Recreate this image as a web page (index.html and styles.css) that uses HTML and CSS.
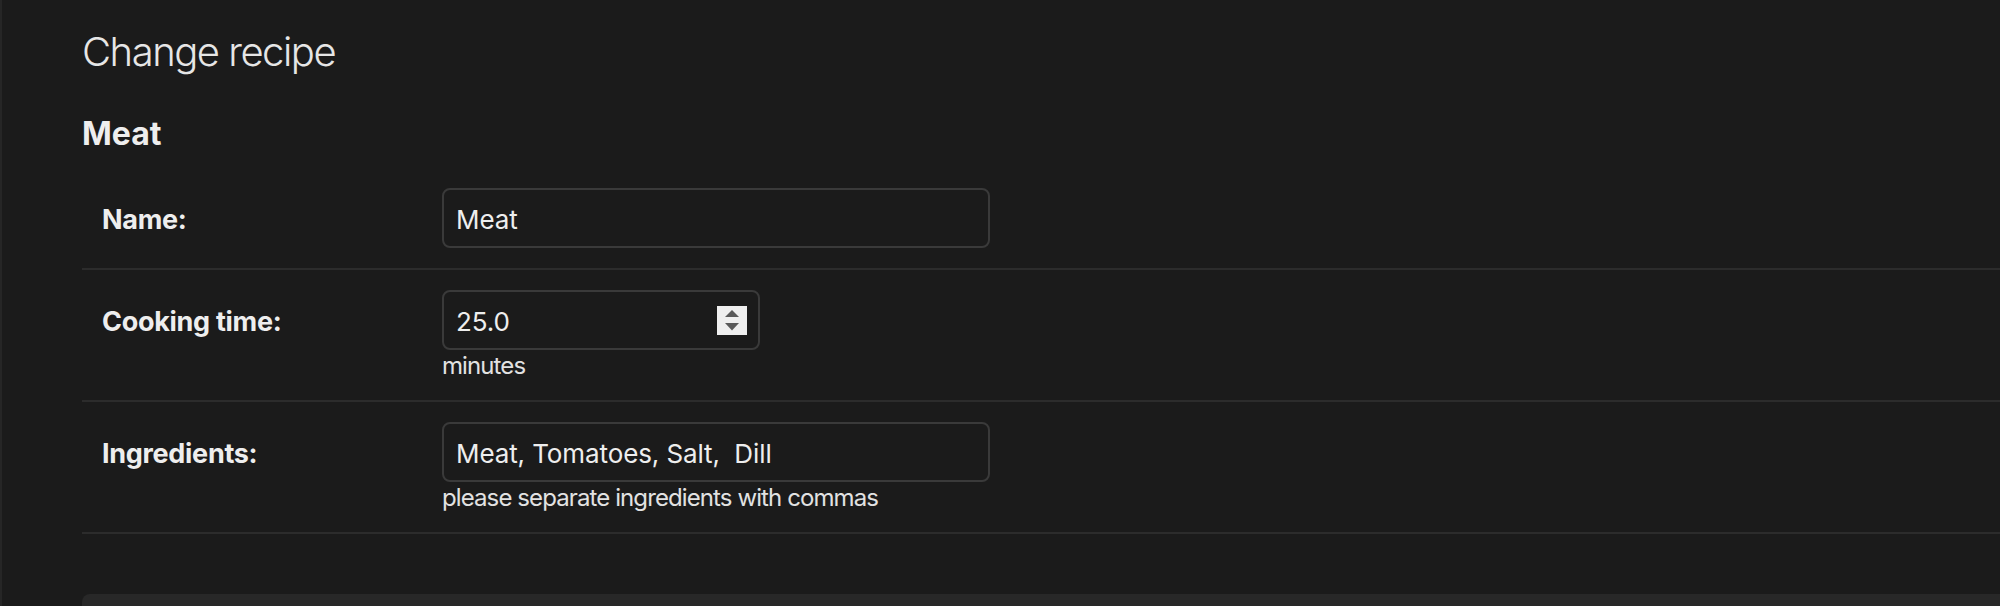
FILE: index.html
```html
<!DOCTYPE html>
<html lang="en">
<head>
<meta charset="utf-8">
<title>Change recipe</title>
<link rel="stylesheet" href="styles.css">
</head>
<body>
<div class="page">
  <main class="content">
    <h1 class="title">Change recipe</h1>
    <h2 class="subtitle">Meat</h2>
    <form class="change-form">
      <fieldset class="module">
        <div class="form-row">
          <label class="field-label" for="id_name">Name:</label>
          <div class="field-box">
            <input class="text-input" id="id_name" type="text" value="Meat">
          </div>
        </div>
        <div class="form-row">
          <label class="field-label" for="id_time">Cooking time:</label>
          <div class="field-box">
            <div class="number-box">
              <input class="number-input" id="id_time" type="text" value="25.0">
              <span class="spinner" aria-hidden="true">
                <svg width="14" height="21" viewBox="0 0 14 21"><path d="M7 0 L14 7 L0 7 Z" fill="#5a5a5a"/><path d="M0 13 L14 13 L7 20.5 Z" fill="#5a5a5a"/></svg>
              </span>
            </div>
            <div class="help">minutes</div>
          </div>
        </div>
        <div class="form-row">
          <label class="field-label" for="id_ingredients">Ingredients:</label>
          <div class="field-box">
            <input class="text-input" id="id_ingredients" type="text" value="Meat, Tomatoes, Salt,  Dill">
            <div class="help">please separate ingredients with commas</div>
          </div>
        </div>
      </fieldset>
      <div class="submit-row"></div>
    </form>
  </main>
</div>
</body>
</html>
```

FILE: styles.css
```css
html, body {
  margin: 0;
  padding: 0;
  overflow: hidden;
  background: #1b1b1b;
}
body {
  font-family: Inter, "Noto Sans", sans-serif;
  color: #eeeeee;
}
.page {
  border-left: 2px solid #262626;
  min-height: 606px;
}
.content {
  padding: 28px 0 0 80px;
}
.title {
  margin: 0;
  font-size: 40px;
  line-height: 48px;
  font-weight: 300;
  color: #e6e6e6;
  letter-spacing: -1.5px;
}
.subtitle {
  margin: 38px 0 0;
  font-size: 32px;
  line-height: 40px;
  font-weight: 700;
  color: #eeeeee;
}
.change-form {
  margin: 14px 0 0;
}
.module {
  margin: 0;
  padding: 0;
  border: 0;
}
.form-row {
  display: flex;
  padding: 20px;
  border-bottom: 2px solid #2c2c2c;
}
.field-label {
  flex: 0 0 320px;
  padding: 15px 20px 0 0;
  font-size: 27px;
  line-height: 34px;
  font-weight: 700;
  letter-spacing: -0.3px;
  color: #eeeeee;
}
.field-box {
  display: flex;
  flex-direction: column;
  align-items: flex-start;
}
.text-input,
.number-box {
  box-sizing: border-box;
  height: 60px;
  border: 2px solid #3a3a3a;
  border-radius: 8px;
  background: #1b1b1b;
  color: #eeeeee;
  font-family: Inter, "Noto Sans", sans-serif;
  font-size: 26px;
  line-height: 35px;
  letter-spacing: -0.1px;
}
.text-input {
  width: 548px;
  padding: 12px 12px 9px;
  outline: none;
}
.number-box {
  width: 318px;
  display: flex;
  align-items: center;
  padding: 0 11px 0 12px;
}
.number-input {
  flex: 1;
  min-width: 0;
  border: 0;
  padding: 3px 0 0;
  margin: 0;
  background: transparent;
  color: #eeeeee;
  font-family: inherit;
  font-size: 26px;
  line-height: 35px;
  letter-spacing: -0.1px;
  outline: none;
}
.spinner {
  flex: 0 0 30px;
  height: 29px;
  background: #efefef;
  display: flex;
  align-items: center;
  justify-content: center;
}
.spinner svg {
  display: block;
}
.help {
  margin-top: 1px;
  font-size: 24px;
  line-height: 29px;
  letter-spacing: -0.9px;
  color: #e2e2e2;
}
.submit-row {
  margin-top: 60px;
  height: 120px;
  background: #282828;
  border-radius: 8px 0 0 0;
}
```
